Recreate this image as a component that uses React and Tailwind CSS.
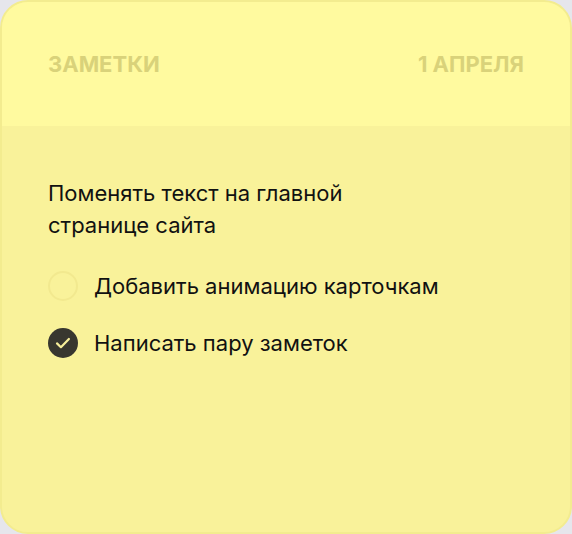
import React, { useState } from "react";

function Check({ done }) {
  if (done) {
    return (
      <span className="flex h-[30px] w-[30px] shrink-0 items-center justify-center rounded-full bg-[#38372f]">
        <svg width="20" height="20" viewBox="0 0 20 20" fill="none">
          <path d="M4 10.4l3.9 3.8 8-8.2" stroke="#f7ef9a" strokeWidth="2.2" strokeLinecap="round" strokeLinejoin="round" />
        </svg>
      </span>
    );
  }
  return <span className="h-[30px] w-[30px] shrink-0 rounded-full border-2 border-[#f2e98f]" />;
}

export default function App() {
  const [items, setItems] = useState([
    { id: 1, text: "Добавить анимацию карточкам", done: false },
    { id: 2, text: "Написать пару заметок", done: true },
  ]);

  const toggle = (id) => {
    setItems(items.map((it) => (it.id === id ? { ...it, done: !it.done } : it)));
  };

  return (
    <div className="h-[534px] w-[572px] bg-[#e6e6ec]" style={{ fontFamily: "Inter, 'Noto Sans', sans-serif" }}>
      <div className="flex h-full flex-col overflow-hidden rounded-[28px] border-2 border-[#f3ec8f] bg-[#f9f29a]">
        <div className="flex h-[124px] shrink-0 items-start justify-between bg-[#fffa9f] px-[46px] pt-[48px]">
          <span className="text-[22px] font-bold uppercase leading-[28px] text-[#d9d27a]">Заметки</span>
          <span className="text-[22px] font-bold uppercase leading-[28px] text-[#d9d27a]">1 апреля</span>
        </div>
        <div className="px-[46px] pt-[51px]">
          <p className="w-[330px] text-[22px] leading-[32px] text-[#111]">Поменять текст на главной странице сайта</p>
          <ul className="mt-[30px] flex flex-col gap-[27px]">
            {items.map((it) => (
              <li key={it.id} className="flex cursor-pointer items-center gap-[16px]" onClick={() => toggle(it.id)}>
                <Check done={it.done} />
                <span className="text-[22px] leading-[30px] text-[#111]">{it.text}</span>
              </li>
            ))}
          </ul>
        </div>
      </div>
    </div>
  );
}
